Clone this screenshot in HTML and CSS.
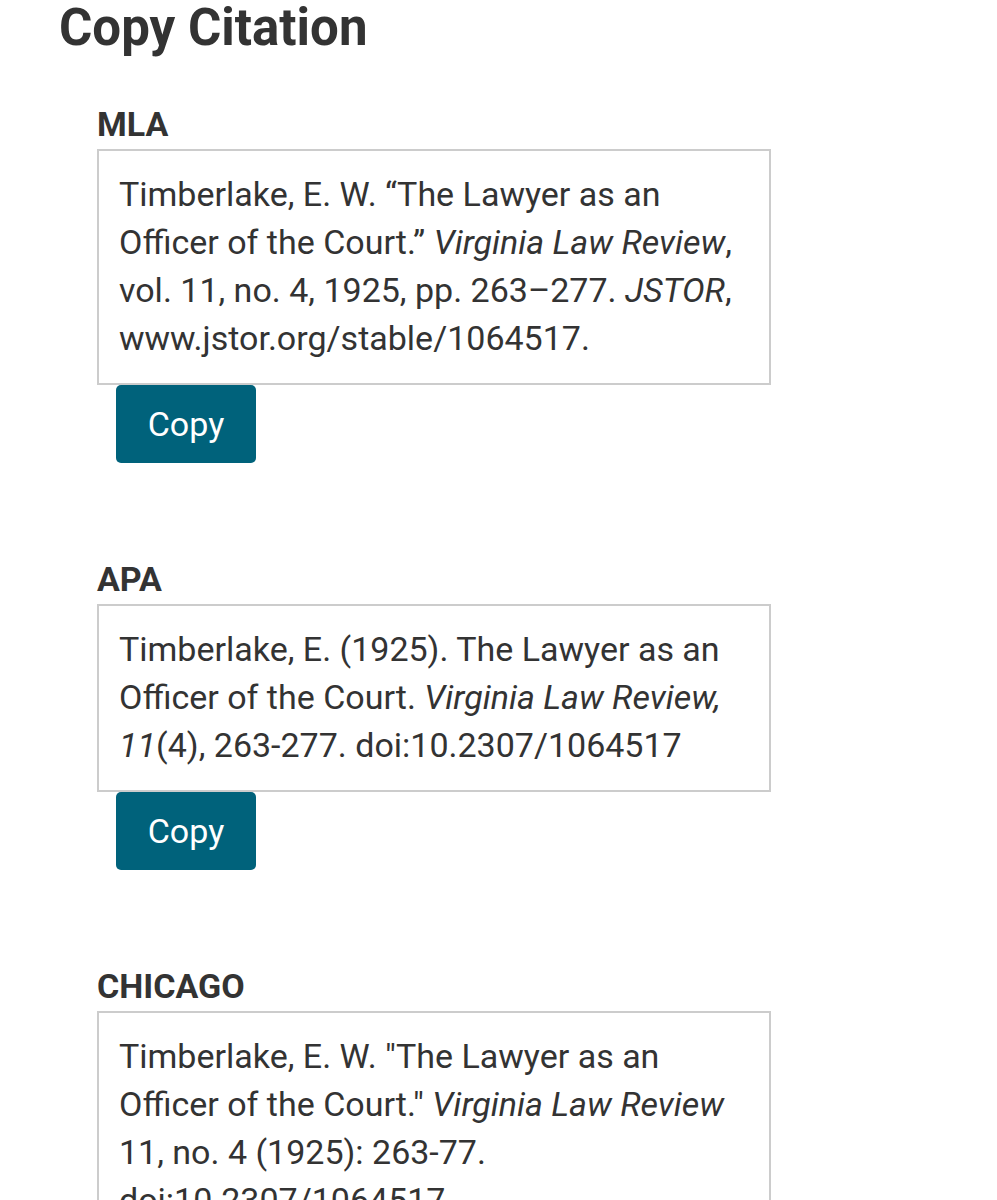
FILE: index.html
```html
<!DOCTYPE html>
<html lang="en">
<head>
    <meta charset="UTF-8">
    <meta name="viewport" content="width=device-width, initial-scale=1.0">
    <title>Copy Citation</title>
    <link rel="stylesheet" href="styles.css">
</head>
<body>
    <div class="container">
        <h1>Copy Citation</h1>

        <section class="citation">
            <h2>MLA</h2>
            <div class="citation-text">
                Timberlake, E. W. “The Lawyer as an Officer of the Court.” <i>Virginia Law Review</i>, vol. 11, no. 4, 1925, pp. 263–277. <i>JSTOR</i>, www.jstor.org/stable/1064517.
            </div>
            <button class="copy-btn">Copy</button>
        </section>

        <section class="citation">
            <h2>APA</h2>
            <div class="citation-text">
                Timberlake, E. (1925). The Lawyer as an Officer of the Court. <i>Virginia Law Review, 11</i>(4), 263-277. doi:10.2307/1064517
            </div>
            <button class="copy-btn">Copy</button>
        </section>

        <section class="citation">
            <h2>CHICAGO</h2>
            <div class="citation-text">
                Timberlake, E. W. "The Lawyer as an Officer of the Court." <i>Virginia Law Review</i> 11, no. 4 (1925): 263-77. doi:10.2307/1064517.
            </div>
            <button class="copy-btn">Copy</button>
        </section>
    </div>
</body>
</html>
```

FILE: styles.css
```css
body {
    font-family: Roboto, 'Liberation Sans', sans-serif;
    margin: 0;
    padding: 0;
    background-color: #fff;
    color: #333;
}
.container {
    padding: 0 59px;
}
h1 {
    font-size: 51px;
    font-weight: 700;
    line-height: 60px;
    margin: -2px 0 0 0;
}
.citation {
    margin: 46px 0 96px 38px;
}
.citation h2 {
    font-size: 34px;
    font-weight: 700;
    line-height: 40px;
    margin: 0 0 5px 0;
}
.citation-text {
    width: 630px;
    border: 2px solid #cccccc;
    padding: 19px 20px 21px 20px;
    font-size: 34px;
    line-height: 48px;
}
.copy-btn {
    display: block;
    margin: 0 0 0 19px;
    width: 140px;
    height: 78px;
    border: none;
    border-radius: 5px;
    background-color: #00627b;
    color: #fff;
    font-family: Roboto, 'Liberation Sans', sans-serif;
    font-size: 34px;
}
```
